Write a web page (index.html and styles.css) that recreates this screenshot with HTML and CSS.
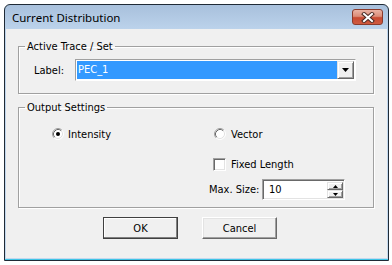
FILE: index.html
```html
<!DOCTYPE html>
<html>
<head>
<meta charset="utf-8">
<link rel="stylesheet" href="styles.css">
</head>
<body>
<div class="window">
  <div class="titlebar">
    <span class="title">Current Distribution</span>
    <span class="close">
      <svg width="14" height="11" viewBox="0 0 14 11"><path d="M3 2 L11 9 M11 2 L3 9" stroke="#4a2a24" stroke-width="4" stroke-linecap="square"/><path d="M3 2 L11 9 M11 2 L3 9" stroke="#fff" stroke-width="2" stroke-linecap="square"/></svg>
    </span>
  </div>
  <div class="client">
    <fieldset class="group">
      <legend>Active Trace / Set</legend>
      <div class="label-row">
        <span class="lbl">Label:</span>
        <div class="combo">
          <span class="combo-value">PEC_1</span>
          <span class="combo-btn"><svg width="7" height="4" viewBox="0 0 7 4"><path d="M0 0H7L3.5 4Z" fill="#000"/></svg></span>
        </div>
      </div>
    </fieldset>
    <fieldset class="group group2">
      <legend>Output Settings</legend>
      <div class="opts">
        <div class="col">
          <div class="opt">
            <svg class="radio" width="12" height="12" viewBox="0 0 12 12"><circle cx="6" cy="6" r="5" fill="#fff"/><path d="M2.11 9.89A5.5 5.5 0 0 1 9.89 2.11" fill="none" stroke="#a0a0a0"/><path d="M9.89 2.11A5.5 5.5 0 0 1 2.11 9.89" fill="none" stroke="#fff"/><path d="M2.82 9.18A4.5 4.5 0 0 1 9.18 2.82" fill="none" stroke="#696969"/><path d="M9.18 2.82A4.5 4.5 0 0 1 2.82 9.18" fill="none" stroke="#e3e3e3"/><circle cx="6" cy="6" r="2" fill="#000"/></svg>
            <span>Intensity</span>
          </div>
        </div>
        <div class="col right">
          <div class="opt vec">
            <svg class="radio" width="12" height="12" viewBox="0 0 12 12"><circle cx="6" cy="6" r="5" fill="#fff"/><path d="M2.11 9.89A5.5 5.5 0 0 1 9.89 2.11" fill="none" stroke="#a0a0a0"/><path d="M9.89 2.11A5.5 5.5 0 0 1 2.11 9.89" fill="none" stroke="#fff"/><path d="M2.82 9.18A4.5 4.5 0 0 1 9.18 2.82" fill="none" stroke="#696969"/><path d="M9.18 2.82A4.5 4.5 0 0 1 2.82 9.18" fill="none" stroke="#e3e3e3"/></svg>
            <span>Vector</span>
          </div>
          <div class="opt chk-row">
            <span class="chk"></span>
            <span>Fixed Length</span>
          </div>
          <div class="size-row">
            <span class="size-lbl">Max. Size:</span>
            <div class="spin">
              <span class="spin-val">10</span>
              <span class="spin-btns">
                <span class="spin-btn"><svg width="5" height="3" viewBox="0 0 5 3"><path d="M2.5 0L5 3H0Z" fill="#000"/></svg></span>
                <span class="spin-btn"><svg width="5" height="3" viewBox="0 0 5 3"><path d="M0 0H5L2.5 3Z" fill="#000"/></svg></span>
              </span>
            </div>
          </div>
        </div>
      </div>
    </fieldset>
    <div class="buttons">
      <span class="btn default">OK</span>
      <span class="btn">Cancel</span>
    </div>
  </div>
</div>
</body>
</html>
```
FILE: styles.css
```css
html, body {
  margin: 0;
  padding: 0;
  background: #fff;
}
body {
  font-family: "DejaVu Sans Condensed", "Liberation Sans", sans-serif;
  font-size: 11px;
  color: #000;
}
.window {
  margin: 4px 0 0 4px;
  width: 385px;
  height: 257px;
  box-sizing: border-box;
  border: 1px solid #1f2a36;
  border-radius: 6px 6px 0 0;
  background: linear-gradient(#a8c0dc, #bdd4ec 26px, #c4d9ee);
  padding: 0 1px 2px 1px;
  display: flex;
  flex-direction: column;
  box-shadow: inset 0 -1px 0 #3ec4e6;
}
.titlebar {
  height: 24px;
  flex: none;
  display: flex;
  align-items: flex-start;
  padding: 0 4px 0 6px;
}
.title {
  font-family: "Noto Sans", "Open Sans", sans-serif;
  font-size: 11.5px;
  line-height: 16px;
  margin-top: 5px;
  color: #000;
}
.close {
  margin-left: auto;
  margin-top: 4px;
  width: 31px;
  height: 16px;
  box-sizing: border-box;
  border: 1px solid #8b3a2b;
  border-radius: 3px;
  background: linear-gradient(#eab3a4 0%, #dc8d79 45%, #c74a32 55%, #cf5a40 100%);
  display: flex;
  align-items: center;
  justify-content: center;
}
.close svg { display: block; }
.client {
  flex: 1;
  background: #f0f0f0;
  padding: 11px 13px 0 12px;
  display: flex;
  flex-direction: column;
}
.group {
  margin: 0;
  padding: 0;
  border: 1px solid #a0a0a0;
  box-shadow: inset 1px 1px 0 #fff, 1px 1px 0 #fff;
  min-width: 0;
}
.group legend {
  margin-left: 6px;
  padding: 0 2px;
  line-height: 13px;
  font-size: 11px;
}
.group2 { margin-top: 7px; }
.label-row {
  display: flex;
  align-items: center;
  padding: 6px 0 12px 15px;
}
.lbl {
  width: 41px;
  flex: none;
}
.combo {
  width: 281px;
  height: 22px;
  box-sizing: border-box;
  border: 1px solid;
  border-color: #a0a0a0 #fff #fff #a0a0a0;
  background: #fff;
  padding: 1px;
  display: flex;
}
.combo-value {
  flex: 1;
  background: #3399ff;
  color: #fff;
  padding-left: 1px;
  line-height: 18px;
}
.combo-btn {
  width: 17px;
  box-sizing: border-box;
  border: 1px solid;
  border-color: #e3e3e3 #696969 #696969 #e3e3e3;
  box-shadow: inset 1px 1px 0 #fff, inset -1px -1px 0 #a0a0a0;
  background: #f0f0f0;
  display: flex;
  align-items: center;
  justify-content: center;
}
.combo-btn svg { display: block; }
.opts {
  display: grid;
  grid-template-columns: 161px auto;
  padding: 12px 0 7px 33px;
}
.col {
  display: flex;
  flex-direction: column;
  align-items: flex-start;
}
.opt {
  height: 16px;
  display: flex;
  align-items: center;
  gap: 4px;
}
.radio { display: block; flex: none; }
.vec { margin-left: 1px; gap: 5px; }
.chk-row { margin-top: 14px; gap: 5px; }
.chk {
  width: 13px;
  height: 13px;
  box-sizing: border-box;
  border: 1px solid;
  border-color: #a0a0a0 #fff #fff #a0a0a0;
  box-shadow: inset 1px 1px 0 #696969, inset -1px -1px 0 #e3e3e3;
  background: #fff;
}
.size-row {
  margin-top: 7px;
  margin-left: -4px;
  display: flex;
  align-items: center;
}
.size-lbl {
  width: 53px;
  flex: none;
}
.spin {
  width: 83px;
  height: 21px;
  box-sizing: border-box;
  border: 1px solid;
  border-color: #a0a0a0 #fff #fff #a0a0a0;
  box-shadow: inset 1px 1px 0 #696969, inset -1px -1px 0 #e3e3e3;
  background: #fff;
  display: flex;
  padding: 2px 1px 1px 2px;
}
.spin-val {
  flex: 1;
  padding-left: 4px;
  line-height: 16px;
}
.spin-btns {
  width: 16px;
  display: flex;
  flex-direction: column;
}
.spin-btn {
  flex: 1;
  box-sizing: border-box;
  border: 1px solid;
  border-color: #e3e3e3 #696969 #696969 #e3e3e3;
  box-shadow: inset 1px 1px 0 #fff, inset -1px -1px 0 #a0a0a0;
  background: #f0f0f0;
  display: flex;
  align-items: center;
  justify-content: center;
}
.spin-btn svg { display: block; }
.buttons {
  display: flex;
  gap: 24px;
  margin-top: 9px;
  padding-left: 85px;
}
.btn {
  width: 75px;
  height: 22px;
  box-sizing: border-box;
  border: 1px solid;
  border-color: #fff #696969 #696969 #fff;
  box-shadow: inset -1px -1px 0 #a0a0a0, inset 1px 1px 0 #e3e3e3;
  background: #f0f0f0;
  display: flex;
  align-items: center;
  justify-content: center;
}
.btn.default {
  border-color: #404040;
  box-shadow: inset -1px -1px 0 #808080, inset 1px 1px 0 #fff;
}
```
